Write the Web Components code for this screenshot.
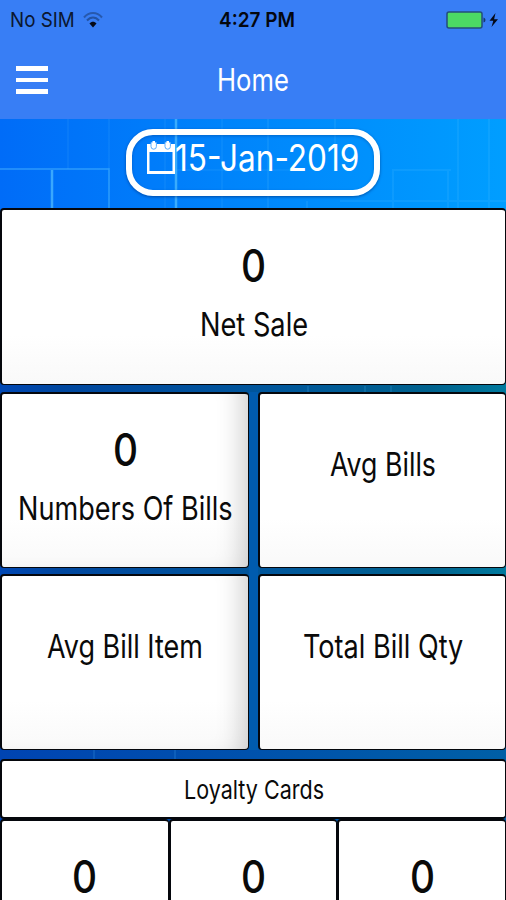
<!DOCTYPE html>
<html lang="en">
<head>
<meta charset="UTF-8">
<title>Home</title>
<style>
    body {
        margin: 0;
        height: 900px;
        overflow: hidden;
        font-family: Inter, "Liberation Sans", sans-serif;
        color: #0a0a0a;
    }
</style>
</head>
<body>
<home-page></home-page>

<script>
// Text squeezed horizontally to a given width
class FitText extends HTMLElement {
    connectedCallback() {
        const width = Number(this.getAttribute('width'));
        this.attachShadow({ mode: 'open' });
        this.shadowRoot.innerHTML = `
            <style>
                :host {
                    display: block;
                    flex: none;
                    width: ${width}px;
                    white-space: nowrap;
                }

                span {
                    display: inline-block;
                    vertical-align: top;
                    transform-origin: left center;
                }
            </style>
            <span><slot></slot></span>
        `;
        const span = this.shadowRoot.querySelector('span');
        span.style.transform = `scaleX(${width / span.offsetWidth})`;
    }
}

class StatusBar extends HTMLElement {
    connectedCallback() {
        this.attachShadow({ mode: 'open' });
        this.shadowRoot.innerHTML = `
            <style>
                :host {
                    display: grid;
                    grid-template-columns: 1fr auto 1fr;
                    align-items: center;
                    height: 40px;
                    padding: 0 7px 0 10px;
                    font-size: 20.5px;
                    line-height: 40px;
                    color: #0b1730;
                }

                .left, .right {
                    display: flex;
                    align-items: center;
                }

                .left { gap: 8px; }
                .right { justify-content: flex-end; }
                .time { font-weight: 600; color: #04070f; padding-left: 5px; }
                svg { display: block; }
            </style>
            <div class="left">
                <fit-text width="65">No SIM</fit-text>
                <svg width="20" height="18" viewBox="0 0 20 18" fill="none" stroke-width="2">
                    <path d="M1 6.5C6 .5 14 .5 19 6.5" stroke="#2759ad"/>
                    <path d="M4 9.5C7.500 5.500 12.500 5.500 16 9.500" stroke="#2353a3"/>
                    <path d="M6.500 12.500C8.500 10.200 11.500 10.200 13.500 12.500L10 16.500Z" fill="#050a18"/>
                </svg>
            </div>
            <fit-text class="time" width="76">4:27 PM</fit-text>
            <div class="right">
                <svg width="54" height="20" viewBox="0 0 54 20">
                    <rect x="2" y="2" width="35" height="16" rx="2" fill="#4cd964" stroke="#234f78" stroke-width="1.500"/>
                    <path d="M38.500 7.500q2 .5 2 2.500t-2 2.500z" fill="#173870"/>
                    <path d="M50.500 3L44.500 10.700H48.300L46.500 17L53 9.200H49.100Z" fill="#050a18"/>
                </svg>
            </div>
        `;
    }
}

class NavBar extends HTMLElement {
    connectedCallback() {
        this.attachShadow({ mode: 'open' });
        this.shadowRoot.innerHTML = `
            <style>
                :host {
                    display: grid;
                    grid-template-columns: 1fr auto 1fr;
                    align-items: center;
                    height: 79px;
                    padding: 0 16px;
                    font-size: 31px;
                    line-height: 79px;
                    color: #fff;
                }

                .menu {
                    display: grid;
                    gap: 7px;
                    width: 32px;
                    margin-top: 1px;
                }

                .menu i {
                    height: 4.500px;
                    background: #fff;
                }
            </style>
            <div class="menu"><i></i><i></i><i></i></div>
            <fit-text width="72"><slot></slot></fit-text>
        `;
    }
}

class DatePill extends HTMLElement {
    connectedCallback() {
        this.attachShadow({ mode: 'open' });
        this.shadowRoot.innerHTML = `
            <style>
                :host {
                    display: flex;
                    box-sizing: border-box;
                    width: 254px;
                    height: 67px;
                    padding: 0 0 0 14px;
                    border: 6px solid #fff;
                    border-radius: 27px;
                    box-shadow: 0 1px 3px rgba(0, 40, 110, .6), inset 0 1px 3px rgba(0, 40, 110, .35);
                    font-size: 36.500px;
                    line-height: 46px;
                    color: #fff;
                }

                svg { display: block; flex: none; margin-top: 6px; }
            </style>
            <svg width="29" height="34" viewBox="0 0 29 34">
                <path d="M1 3H29V33H1ZM3.500 11V30H26.500V11Z" fill="#fff" fill-rule="evenodd"/>
                <path d="M5 1.500V5.500A2.700 2.700 0 0 0 10.400 5.500V1.500M19 1.500V5.500A2.700 2.700 0 0 0 24.400 5.500V1.500" fill="#fff" stroke="#58adff" stroke-width="1"/>
                <path d="M6.500 0h2.500v3h-2.500zM20.500 0h2.500v3h-2.500z" fill="#fff"/>
            </svg>
            <fit-text width="184"><slot></slot></fit-text>
        `;
    }
}

class StatCard extends HTMLElement {
    connectedCallback() {
        const value = this.getAttribute('value');
        const label = this.getAttribute('label');
        this.attachShadow({ mode: 'open' });
        this.shadowRoot.innerHTML = `
            <style>
                :host {
                    display: flex;
                    flex-direction: column;
                    align-items: center;
                    box-sizing: border-box;
                    padding-top: ${value ? 33 : 51}px;
                    border: solid #05070c;
                    border-width: 2px 1px 1px 2px;
                    border-radius: 4px;
                    background: linear-gradient(#fff 72%, #f9f9f9);
                }

                :host([shaded]) {
                    box-shadow: inset -26px -4px 26px -20px rgba(0, 0, 0, .2);
                }

                :host([plain]) { background: #fff; }

                .value {
                    font-size: 45px;
                    font-weight: 550;
                    line-height: 46px;
                }

                .label {
                    margin-top: ${value ? 16 : 0}px;
                    font-size: 32.500px;
                    line-height: 40px;
                }
            </style>
            ${value ? `<fit-text class="value" width="25">${value}</fit-text>` : ''}
            ${label ? `<fit-text class="label" width="${this.getAttribute('label-width')}">${label}</fit-text>` : ''}
        `;
    }
}

class SectionTitle extends HTMLElement {
    connectedCallback() {
        this.attachShadow({ mode: 'open' });
        this.shadowRoot.innerHTML = `
            <style>
                :host {
                    display: flex;
                    justify-content: center;
                    box-sizing: border-box;
                    height: 60px;
                    border: solid #05070c;
                    border-width: 2px 1px 2px 2px;
                    border-radius: 4px;
                    background: #fff;
                    font-size: 26px;
                    line-height: 58px;
                }
            </style>
            <fit-text width="140"><slot></slot></fit-text>
        `;
    }
}

// Blue circuit-like picture behind the cards
class PageBackdrop extends HTMLElement {
    connectedCallback() {
        this.attachShadow({ mode: 'open' });
        this.shadowRoot.innerHTML = `
            <style>
                :host {
                    position: absolute;
                    inset: 0;
                    z-index: -1;
                }

                svg { display: block; }
            </style>
            <svg width="506" height="781" viewBox="0 119 506 781">
                <defs>
                    <linearGradient id="sky">
                        <stop offset="0" stop-color="#006cf8"/>
                        <stop offset=".45" stop-color="#0084fb"/>
                        <stop offset="1" stop-color="#009eff"/>
                    </linearGradient>
                    <linearGradient id="deep">
                        <stop offset="0" stop-color="#0047b4"/>
                        <stop offset=".12" stop-color="#00479f"/>
                        <stop offset=".55" stop-color="#00579b"/>
                        <stop offset=".85" stop-color="#00628e"/>
                        <stop offset="1" stop-color="#007a9e"/>
                    </linearGradient>
                    <linearGradient id="low">
                        <stop offset="0" stop-color="#0044b2"/>
                        <stop offset="1" stop-color="#005fa6"/>
                    </linearGradient>
                </defs>
                <rect y="119" width="506" height="95" fill="url(#sky)"/>
                <rect y="214" width="506" height="520" fill="url(#deep)"/>
                <rect y="734" width="506" height="166" fill="url(#low)"/>
                <rect x="249" y="392" width="9" height="358" fill="#005bae"/>
                <g fill="none" stroke="#59c4ff">
                    <path d="M52 170V209M176 119V209" stroke-width="2.500" opacity=".65"/>
                    <path d="M0 169H109V209" stroke-width="1.500" opacity=".5"/>
                    <path d="M68 119V169M109 119V169M222 119V209M165 119V209M176 170H300" opacity=".2"/>
                    <path d="M268 119V209M335 119V145M307 201V209M393 209V170H451M448 170V209M458 119V209M489 119V209M340 201H506" stroke-width="2" opacity=".14"/>
                    <path d="M308 386V392M365 386V392M391 386V392M94 750V760M175 750V760" opacity=".3"/>
                </g>
            </svg>
        `;
    }
}

class HomePage extends HTMLElement {
    connectedCallback() {
        this.attachShadow({ mode: 'open' });
        this.shadowRoot.innerHTML = `
            <style>
                :host {
                    display: block;
                    height: 900px;
                    overflow: hidden;
                }

                header {
                    height: 119px;
                    background: #387ef5;
                }

                main {
                    position: relative;
                    z-index: 0;
                    height: 781px;
                    overflow: hidden;
                }

                .date {
                    display: flex;
                    justify-content: center;
                    height: 79px;
                    padding-top: 10px;
                }

                .net { height: 177px; }

                .grid {
                    display: grid;
                    grid-template-columns: 249px 248px;
                    grid-auto-rows: 176px;
                    gap: 6px 9px;
                    margin: 7px 0 9px;
                }

                .cells {
                    display: grid;
                    grid-template-columns: repeat(3, 1fr);
                    height: 90px;
                }
            </style>
            <header>
                <status-bar></status-bar>
                <nav-bar>Home</nav-bar>
            </header>
            <main>
                <page-backdrop></page-backdrop>
                <div class="date"><date-pill>15-Jan-2019</date-pill></div>
                <stat-card class="net" value="0" label="Net Sale" label-width="108"></stat-card>
                <div class="grid">
                    <stat-card shaded value="0" label="Numbers Of Bills" label-width="215"></stat-card>
                    <stat-card label="Avg Bills" label-width="106"></stat-card>
                    <stat-card shaded label="Avg Bill Item" label-width="156"></stat-card>
                    <stat-card label="Total Bill Qty" label-width="160"></stat-card>
                </div>
                <section-title>Loyalty Cards</section-title>
                <div class="cells">
                    <stat-card plain value="0"></stat-card>
                    <stat-card plain value="0"></stat-card>
                    <stat-card plain value="0"></stat-card>
                </div>
            </main>
        `;
    }
}

customElements.define('fit-text', FitText);
customElements.define('status-bar', StatusBar);
customElements.define('nav-bar', NavBar);
customElements.define('date-pill', DatePill);
customElements.define('stat-card', StatCard);
customElements.define('section-title', SectionTitle);
customElements.define('page-backdrop', PageBackdrop);
customElements.define('home-page', HomePage);
</script>
</body>
</html>
